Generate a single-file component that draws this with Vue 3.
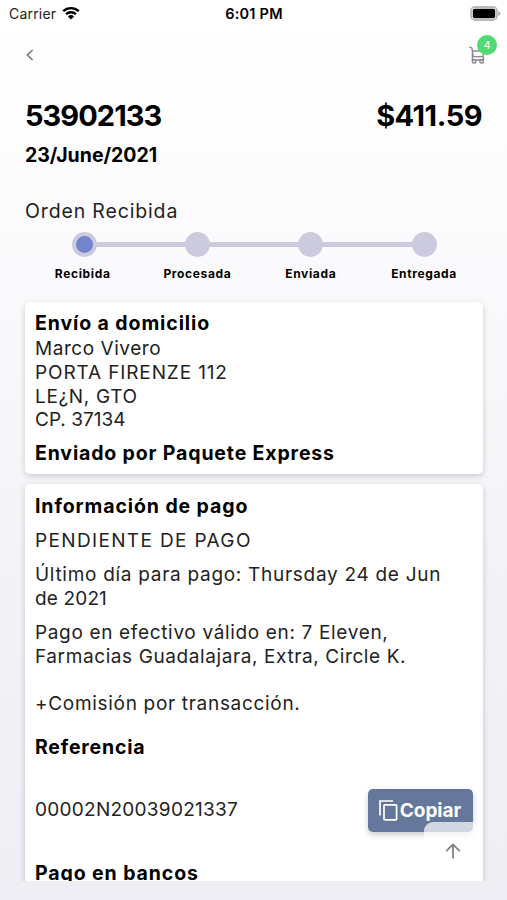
<template>
  <div class="screen">
    <header class="status-bar">
      <div class="status-left">
        <span class="carrier">Carrier</span>
        <svg class="wifi" viewBox="0 0 18 14" width="18" height="14">
          <path d="M1.2 5.2 A11.4 11.4 0 0 1 16.8 5.2" />
          <path d="M4 8.2 A7.2 7.2 0 0 1 14 8.2" />
          <path class="wifi-dot" d="M9 13.6 L5.9 10.5 A4.6 4.6 0 0 1 12.1 10.5 Z" />
        </svg>
      </div>
      <span class="time">6:01 PM</span>
      <svg class="battery" viewBox="0 0 31 15" width="31" height="15">
        <rect x="1" y="1" width="26" height="13" rx="4" class="battery-shell" />
        <rect x="2.8" y="2.8" width="22.4" height="9.4" rx="1.8" />
        <path d="M28.3 5 Q30.5 6 30.5 7.5 Q30.5 9 28.3 10 Z" class="battery-tip" />
      </svg>
    </header>

    <nav class="nav">
      <svg class="back" viewBox="0 0 8 12" width="8" height="12">
        <path d="M6.6 1 L1.4 6 L6.6 11" />
      </svg>
      <div class="cart">
        <svg viewBox="0 0 18 18" width="18" height="18">
          <path d="M0.4 0.8 L3 2.2 L4.2 10.6 H14 L15 5 H3.4 M3.4 4 V14 H14.4 V10.6" />
          <circle cx="5.1" cy="15.2" r="1.8" />
          <circle cx="12.6" cy="15.2" r="1.8" />
        </svg>
        <span class="badge">4</span>
      </div>
    </nav>

    <main class="content">
      <div class="order-head">
        <span class="order-number">53902133</span>
        <span class="order-total">$411.59</span>
      </div>
      <div class="order-date">23/June/2021</div>
      <div class="order-status">Orden Recibida</div>

      <div class="steps">
        <div
          v-for="(paso, i) in pasos"
          :key="paso"
          class="step"
          :class="{ 'step-active': i === 0 }"
        >
          <span class="dot"></span>
          <span class="step-label">{{ paso }}</span>
        </div>
      </div>

      <section class="card">
        <div class="title">Envío a domicilio</div>
        <div class="line l-nombre">Marco Vivero</div>
        <div class="line l-calle">PORTA FIRENZE 112</div>
        <div class="line l-ciudad">LE¿N, GTO</div>
        <div class="line l-cp">CP. 37134</div>
        <div class="title t-paquete">Enviado por Paquete Express</div>
      </section>

      <section class="card card-pago">
        <div class="title">Información de pago</div>
        <div class="line l-pendiente">PENDIENTE DE PAGO</div>
        <div class="parrafo">
          <div class="line l-dia">Último día para pago: Thursday 24 de Jun</div>
          <div class="line l-anio">de 2021</div>
        </div>
        <div class="parrafo">
          <div class="line">Pago en efectivo válido en: 7 Eleven,</div>
          <div class="line l-farmacias">Farmacias Guadalajara, Extra, Circle K.</div>
        </div>
        <div class="line l-comision">+Comisión por transacción.</div>
        <div class="title t-referencia">Referencia</div>
        <div class="referencia-row">
          <span class="line l-ref">00002N20039021337</span>
          <button class="btn-copiar">
            <svg viewBox="0 0 19 21" width="19" height="21">
              <path d="M1 15.5 V1 H14" />
              <rect x="5" y="4.8" width="12.6" height="15" rx="0.8" />
            </svg>
            <span>Copiar</span>
          </button>
        </div>
        <div class="title t-bancos">Pago en bancos</div>
      </section>

      <button class="btn-subir">
        <svg viewBox="0 0 16 16" width="16" height="16">
          <path d="M8 15.5 V1.6 M1.2 8.2 L8 1.4 L14.8 8.2" />
        </svg>
      </button>
    </main>
  </div>
</template>

<script setup>
const pasos = ['Recibida', 'Procesada', 'Enviada', 'Entregada']
</script>

<style>
body {
  background: #eeeef4;
}
</style>

<style scoped>
.screen {
  height: 900px;
  overflow: hidden;
  background: linear-gradient(#ffffff 0%, #fdfdfe 15%, #f7f7fa 45%, #f0f0f5 80%, #eeeef4 100%);
  font-family: Inter, "Noto Sans", sans-serif;
  color: #000;
}

.status-bar {
  display: grid;
  grid-template-columns: 1fr auto 1fr;
  align-items: center;
  height: 27px;
  padding: 0 6px 0 9px;
}

.status-left {
  display: flex;
  align-items: center;
  gap: 6px;
}

.carrier {
  font-size: 14px;
  letter-spacing: 0.2px;
  color: #222;
}

.wifi {
  fill: none;
  stroke: #000;
  stroke-width: 2.4;
  margin-top: -1px;
}

.wifi-dot {
  fill: #000;
  stroke: none;
}

.time {
  margin-right: 2px;
  font-size: 14.5px;
  font-weight: 600;
  letter-spacing: 0.25px;
}

.battery {
  justify-self: end;
  margin-top: -1px;
}

.battery-shell {
  fill: none;
  stroke: #b9b9b9;
  stroke-width: 1.8;
}

.battery-tip {
  fill: #aaa;
}

.nav {
  display: flex;
  justify-content: space-between;
  align-items: center;
  height: 55px;
  padding: 0 20px 0 26px;
}

.back {
  fill: none;
  stroke: #777;
  stroke-width: 1.5;
}

.cart {
  position: relative;
  width: 18px;
  height: 18px;
  fill: none;
  stroke: #8a8b92;
  stroke-width: 1.4;
}

.cart svg {
  display: block;
}

.badge {
  position: absolute;
  left: 8px;
  top: -11px;
  width: 20px;
  height: 20px;
  border-radius: 50%;
  background: #51d973;
  color: #fff;
  font-size: 11px;
  line-height: 20px;
  text-align: center;
}

.content {
  position: relative;
  height: 799px;
  padding: 0 24px 0 25px;
  overflow: hidden;
}

.order-head {
  display: flex;
  justify-content: space-between;
  height: 36px;
  margin-top: 16px;
  line-height: 36px;
  font-size: 29px;
  font-weight: 700;
}

.order-number {
  letter-spacing: -0.95px;
}

.order-total {
  margin-right: 1px;
  letter-spacing: -0.5px;
}

.order-date {
  margin-top: 9px;
  line-height: 24px;
  font-size: 19.5px;
  font-weight: 700;
}

.order-status {
  margin-top: 32px;
  line-height: 24px;
  font-size: 19.5px;
  letter-spacing: 0.85px;
  color: #222;
}

.steps {
  display: grid;
  grid-template-columns: repeat(4, 113.3px);
  margin: 9px 0 0 2.5px;
}

.step {
  position: relative;
  display: flex;
  flex-direction: column;
  align-items: center;
}

.step + .step::before {
  content: '';
  position: absolute;
  left: -50%;
  top: 10px;
  width: 100%;
  height: 5px;
  background: #cbcadf;
}

.dot {
  box-sizing: border-box;
  position: relative;
  z-index: 1;
  width: 25px;
  height: 25px;
  border: 4px solid #cbcade;
  border-radius: 50%;
  background: #cbcade;
}

.step-active .dot {
  background: #7284cb;
}

.step-label {
  margin-top: 9px;
  line-height: 16px;
  font-size: 12px;
  font-weight: 700;
  letter-spacing: 0.65px;
}

.step-active .step-label {
  margin-right: 3px;
}

.card {
  margin-top: 20px;
  height: 172px;
  box-sizing: border-box;
  padding: 9px 10px 0;
  border-radius: 5px;
  background: #fff;
  box-shadow: 0 2px 6px rgba(0, 0, 0, 0.18);
}

.card-pago {
  margin-top: 10px;
  height: 440px;
  padding-top: 10px;
}

.title {
  line-height: 24px;
  font-size: 19.5px;
  font-weight: 700;
  letter-spacing: 0.9px;
  white-space: nowrap;
}

.line {
  line-height: 23.8px;
  font-size: 19px;
  letter-spacing: 0.66px;
  color: #222;
  white-space: nowrap;
}

.l-nombre {
  margin-top: 2px;
  letter-spacing: 0.55px;
}

.l-calle {
  letter-spacing: 0.87px;
}

.l-cp {
  letter-spacing: 0;
}

.t-paquete {
  margin-top: 9px;
  letter-spacing: 0.85px;
}

.l-pendiente {
  margin-top: 11px;
  letter-spacing: 1.35px;
}

.parrafo {
  margin-top: 10.2px;
}

.l-dia {
  letter-spacing: 0.71px;
}

.l-anio {
  letter-spacing: 0.15px;
}

.l-farmacias {
  letter-spacing: 0.6px;
}

.l-comision {
  margin-top: 23.8px;
  letter-spacing: 0.69px;
}

.t-referencia {
  margin-top: 19px;
  letter-spacing: 0.8px;
}

.referencia-row {
  display: flex;
  align-items: center;
  justify-content: space-between;
  height: 43px;
  margin-top: 29.6px;
}

.l-ref {
  letter-spacing: 0.27px;
}

.btn-copiar {
  display: flex;
  align-items: center;
  justify-content: center;
  gap: 2px;
  width: 105px;
  height: 43px;
  padding: 0 1px 0 0;
  border: none;
  border-radius: 5px;
  background: #65789b;
  box-shadow: 0 3px 6px rgba(0, 0, 0, 0.2);
  color: #fff;
  font-family: inherit;
  font-size: 19px;
  font-weight: 700;
}

.btn-copiar svg {
  fill: none;
  stroke: #fff;
  stroke-width: 1.7;
}

.t-bancos {
  margin-top: 29px;
}

/* floating scroll-to-top button over the card */
.btn-subir {
  position: absolute;
  right: 24px;
  bottom: 0;
  display: flex;
  align-items: center;
  justify-content: center;
  width: 59px;
  height: 59px;
  padding: 0 2px 1px 0;
  border: none;
  border-radius: 9px 0 0 0;
  background: rgba(255, 255, 255, 0.7);
}

.btn-subir svg {
  fill: none;
  stroke: #808080;
  stroke-width: 1.8;
}
</style>
